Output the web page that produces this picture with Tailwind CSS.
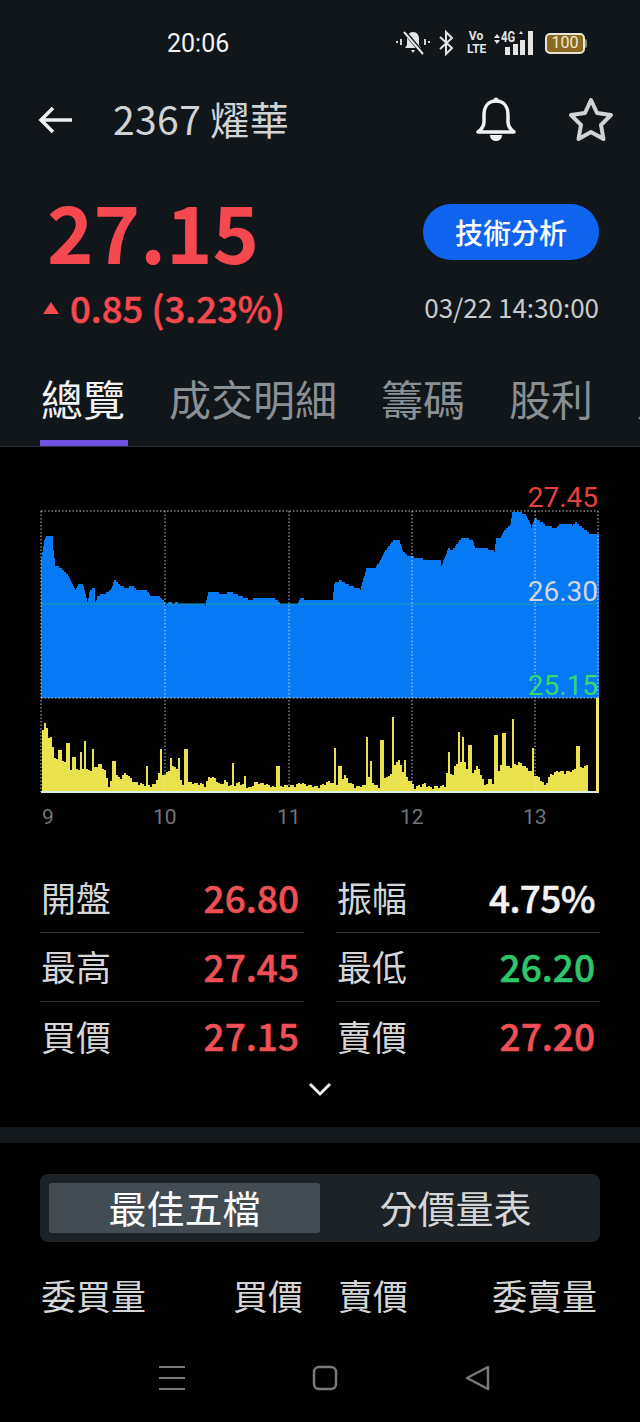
<!DOCTYPE html>
<html lang="en">
<head>
    <meta charset="UTF-8">
    <title>2367 燿華</title>
    <script src="https://cdn.jsdelivr.net/npm/@tailwindcss/browser@4"></script>
</head>
<body class="bg-black text-white w-[640px] h-[1422px] overflow-hidden font-['Noto_Sans_CJK_TC','Noto_Sans',sans-serif]">
    <!-- Top header -->
    <header class="bg-[#11161a] h-[447px] border-b border-[#2a2e32] flex flex-col">
        <!-- Status bar -->
        <div class="h-[86px] flex items-center pl-[167px] pr-[50px] shrink-0 font-['Roboto',sans-serif]">
            <span class="text-[25px] leading-none text-[#f2f2f2] w-[229px]">20:06</span>
            <svg width="34" height="26" viewBox="0 0 34 26" class="shrink-0">
                <path d="M17 2c-4 0-6 3-6 7v6l-2 3h16l-2-3V9c0-4-2-7-6-7z" fill="#e4e4e4"/>
                <path d="M15 20h4l-2 3z" fill="#e4e4e4"/>
                <path d="M8 1l20 24" stroke="#11161a" stroke-width="4"/>
                <path d="M8 2l19 22" stroke="#e4e4e4" stroke-width="2"/>
                <path d="M5 9v6M1 11v2M29 9v6M33 11v2" stroke="#d0d0d0" stroke-width="2"/>
            </svg>
            <svg width="16" height="26" viewBox="0 0 16 26" class="ml-[8px] shrink-0" fill="none" stroke="#e4e4e4" stroke-width="2">
                <path d="M2 7l12 11-6 6V2l6 6L2 19"/>
            </svg>
            <div class="ml-[13px] w-[18px] text-[12px] leading-[13px] font-bold text-[#e4e4e4] text-center font-['Liberation_Sans_Narrow','Roboto',sans-serif] shrink-0">Vo<br>LTE</div>
            <div class="ml-[9px] relative w-[40px] h-[26px] shrink-0">
                <span class="absolute left-[7px] top-[-3px] text-[15px] leading-[20px] font-bold text-[#e4e4e4] scale-x-75 origin-left">4G</span>
                <svg width="40" height="26" viewBox="0 0 40 26" class="absolute inset-0">
                    <path d="M0 8l3-4 3 4zM0 10l3 4 3-4z" fill="#e4e4e4"/>
                    <path d="M25 4l2-3 2 3z" fill="#e4e4e4"/>
                    <rect x="11" y="17" width="5" height="8" fill="#e4e4e4"/>
                    <rect x="19" y="14" width="5" height="11" fill="#e4e4e4"/>
                    <rect x="26" y="10" width="5" height="15" fill="#e4e4e4"/>
                    <rect x="34" y="1" width="5" height="24" fill="#e4e4e4"/>
                </svg>
            </div>
            <div class="ml-[11px] w-[40px] h-[21px] border-2 border-[#e8e4d8] rounded-[5px] bg-[#8a6a1e] flex items-center justify-center text-[16px] leading-none text-[#f2ecd8] shrink-0">100</div>
            <div class="w-[2px] h-[9px] bg-[#888] rounded-r-sm shrink-0"></div>
        </div>

        <!-- Title row -->
        <div class="h-[68px] flex items-center pl-[38px] pr-[26px] shrink-0">
            <svg width="35" height="28" viewBox="0 0 35 28" fill="none" stroke="#f0f0f0" stroke-width="3.500" class="shrink-0">
                <path d="M34 14H4M15 2L3 14l12 12"/>
            </svg>
            <h1 class="ml-[40px] mb-[4px] text-[39px] leading-none tracking-[0.4px] text-[#d0d3d6]">2367 燿華</h1>
            <svg width="40" height="46" viewBox="0 0 40 46" fill="none" class="ml-auto shrink-0">
                <circle cx="20" cy="3" r="2.500" fill="#f2f2f2"/>
                <path d="M20 4c-8 0-12 6-12 14v7c0 4-2 7-6 10h36c-4-3-6-6-6-10v-7c0-8-4-14-12-14z" stroke="#f2f2f2" stroke-width="3.500" stroke-linejoin="round"/>
                <path d="M14 38h12c0 4-3 6-6 6s-6-2-6-6z" fill="#f2f2f2"/>
            </svg>
            <svg width="46" height="46" viewBox="0 0 46 46" fill="none" class="ml-[52px] mt-[-2px] shrink-0">
                <path d="M23 4l6 13 14 2-10 10 2.500 14L23 36l-12.500 7L13 29 3 19l14-2z" stroke="#d0d3d6" stroke-width="4" stroke-linejoin="round"/>
            </svg>
        </div>

        <!-- Price row -->
        <div class="flex justify-between pl-[47px] pr-[41px] mt-[36px] shrink-0">
            <div>
                <div class="text-[79px] leading-[80px] font-bold text-[#f6484f]">27.15</div>
                <div class="flex items-center mt-[18px] ml-[-4px] text-[36.500px] leading-[40px] font-medium text-[#f6484f] whitespace-nowrap [-webkit-text-stroke:0.5px_#f6484f]">
                    <span class="w-0 h-0 border-x-[8px] border-x-transparent border-b-[12px] border-b-[#f6484f] mr-[11px]"></span>
                    0.85 (3.23%)
                </div>
            </div>
            <div class="flex flex-col items-end">
                <button class="w-[176px] h-[56px] rounded-full bg-[#0e64ee] text-[28px] font-medium text-white mt-[14px]">技術分析</button>
                <div class="mt-[33px] text-[26px] leading-[28px] text-[#c8cbce] whitespace-nowrap">03/22 14:30:00</div>
            </div>
        </div>

        <!-- Tabs -->
        <nav class="relative flex mt-auto h-[82px] pt-[2px] pl-[41px] gap-[44px] text-[42px] leading-[64px] text-[#8a8f93] whitespace-nowrap overflow-hidden">
            <span class="text-[#f2f2f2]">總覽</span>
            <span>成交明細</span>
            <span>籌碼</span>
            <span>股利</span>
            <span>財務</span>
            <span class="absolute left-[40px] bottom-0 w-[88px] h-[6px] bg-[#7152e0]"></span>
        </nav>
    </header>

    <!-- Chart -->
    <section class="relative h-[400px] font-['Roboto',sans-serif]">
        <svg id="chart" width="640" height="400" viewBox="0 447 640 400" class="absolute inset-0">
            <path id="area" fill="#0679f5"/>
            <path id="vol" fill="none" stroke="#e9e24d" stroke-width="2"/>
            <path d="M41 604H598" stroke="#1e9fb0" stroke-width="1"/>
            <path d="M41 511H598M41 698H598M41 511V792M165 511V792M289 511V792M412 511V792M535 511V792M598 511V792" stroke="#e8e8e8" stroke-width="1" stroke-dasharray="1.500 2" fill="none" opacity="0.85"/>
            <path d="M41 792H599" stroke="#d8efe4" stroke-width="2"/>
            <rect x="596" y="698" width="3" height="94" fill="#efe86a"/>
        </svg>
        <span class="absolute right-[42px] top-[36px] text-[28px] leading-[30px] text-[#e8413f]">27.45</span>
        <span class="absolute right-[42px] top-[130px] text-[28px] leading-[30px] text-[#d2d6da]">26.30</span>
        <span class="absolute right-[42px] top-[224px] text-[28px] leading-[30px] text-[#35d96b]">25.15</span>
        <span class="absolute left-[42px] top-[358px] text-[21px] leading-[24px] text-[#6f7478]">9</span>
        <span class="absolute left-[153px] top-[358px] text-[21px] leading-[24px] text-[#6f7478]">10</span>
        <span class="absolute left-[277px] top-[358px] text-[21px] leading-[24px] text-[#6f7478]">11</span>
        <span class="absolute left-[400px] top-[358px] text-[21px] leading-[24px] text-[#6f7478]">12</span>
        <span class="absolute left-[523px] top-[358px] text-[21px] leading-[24px] text-[#6f7478]">13</span>
    </section>

    <!-- Quote table -->
    <section class="grid grid-cols-[264px_264px] gap-x-[32px] pl-[40px] mt-[17px] text-[37px] leading-[46px]">
        <div class="flex justify-between items-center h-[69px] border-b border-[#33373a] pl-[1px] pr-[5px]"><span class="text-[#d4d6d8] text-[35px] mt-[-2px]">開盤</span><span class="font-medium text-[#ee5055] mt-[-3px] [-webkit-text-stroke:0.5px_#ee5055]">26.80</span></div>
        <div class="flex justify-between items-center h-[69px] border-b border-[#33373a] pl-[1px] pr-[5px]"><span class="text-[#d4d6d8] text-[35px] mt-[-2px]">振幅</span><span class="font-medium text-[#f2f2f2] mt-[-3px] tracking-[-0.6px] [-webkit-text-stroke:0.5px_#f2f2f2]">4.75%</span></div>
        <div class="flex justify-between items-center h-[69px] border-b border-[#33373a] pl-[1px] pr-[5px]"><span class="text-[#d4d6d8] text-[35px] mt-[-2px]">最高</span><span class="font-medium text-[#ee5055] mt-[-3px] [-webkit-text-stroke:0.5px_#ee5055]">27.45</span></div>
        <div class="flex justify-between items-center h-[69px] border-b border-[#33373a] pl-[1px] pr-[5px]"><span class="text-[#d4d6d8] text-[35px] mt-[-2px]">最低</span><span class="font-medium text-[#2fc56a] mt-[-3px] [-webkit-text-stroke:0.5px_#2fc56a]">26.20</span></div>
        <div class="flex justify-between items-center h-[69px] pl-[1px] pr-[5px]"><span class="text-[#d4d6d8] text-[35px] mt-[-2px]">買價</span><span class="font-medium text-[#ee5055] mt-[-3px] [-webkit-text-stroke:0.5px_#ee5055]">27.15</span></div>
        <div class="flex justify-between items-center h-[69px] pl-[1px] pr-[5px]"><span class="text-[#d4d6d8] text-[35px] mt-[-2px]">賣價</span><span class="font-medium text-[#ee5055] mt-[-3px] [-webkit-text-stroke:0.5px_#ee5055]">27.20</span></div>
    </section>
    <div class="flex justify-center mt-[10px]">
        <svg width="24" height="16" viewBox="0 0 24 16" fill="none" stroke="#e8e8e8" stroke-width="3"><path d="M2 3l10 10L22 3"/></svg>
    </div>

    <!-- Divider band -->
    <div class="h-[16px] bg-[#14191d] mt-[30px]"></div>

    <!-- Segmented control -->
    <div class="mx-[40px] mt-[31px] h-[68px] rounded-lg bg-[#1d2227] p-[9px] flex text-[38px] text-[#d4d6d8]">
        <div class="w-[271px] rounded-[3px] bg-[#434c53] text-white flex items-center justify-center pb-[3px]">最佳五檔</div>
        <div class="flex-1 flex items-center justify-center pb-[3px]">分價量表</div>
    </div>

    <!-- Order book header -->
    <div class="ml-[41px] mt-[29px] flex text-[35px] leading-[48px] text-[#d4d6d8] whitespace-nowrap">
        <span class="w-[192px]">委買量</span>
        <span class="w-[105px]">買價</span>
        <span class="w-[154px]">賣價</span>
        <span>委賣量</span>
    </div>

    <!-- Android nav bar -->
    <div class="flex items-start mt-[46px] pl-[159px]">
        <svg width="26" height="26" viewBox="0 0 26 26" stroke="#77797b" stroke-width="2"><path d="M0 2H26M0 13H26M0 24H26"/></svg>
        <svg width="26" height="26" viewBox="0 0 26 26" fill="none" stroke="#77797b" stroke-width="2.500" class="ml-[127px]"><rect x="2" y="2" width="22" height="22" rx="5"/></svg>
        <svg width="26" height="26" viewBox="0 0 26 26" fill="none" stroke="#77797b" stroke-width="2.500" stroke-linejoin="round" class="ml-[127px]"><path d="M23 2v22L2 13z"/></svg>
    </div>

    <script>
        const priceKeys = [[41,557],[44,540],[47,535],[52,535],[53,550],[55,565],[60,568],[68,575],[73,585],[75,590],[78,583],[82,583],[84,590],[87,602],[89,592],[92,588],[94,588],[95,602],[97,596],[105,593],[110,590],[114,580],[120,585],[126,588],[132,585],[137,590],[147,591],[150,596],[158,595],[163,600],[165,605],[170,601],[173,604],[176,601],[178,604],[205,605],[208,592],[215,592],[222,594],[230,592],[240,596],[250,600],[258,597],[275,599],[280,603],[297,603],[300,597],[305,600],[332,599],[334,583],[340,580],[350,586],[360,589],[366,568],[375,568],[380,560],[383,553],[393,540],[399,540],[402,550],[408,556],[420,558],[426,560],[440,560],[441,566],[448,548],[452,550],[462,537],[472,540],[475,548],[485,548],[494,551],[496,538],[500,538],[504,530],[510,524],[512,511],[516,511],[525,514],[530,524],[531,527],[535,518],[545,525],[555,528],[560,524],[572,525],[575,522],[585,530],[590,534],[598,534]];
        const volBody = [[42,730],[46,720],[48,735],[52,738],[54,755],[58,760],[62,760],[66,762],[68,770],[80,768],[90,770],[100,763],[105,770],[109,785],[115,773],[120,778],[126,772],[130,777],[135,782],[140,783],[150,785],[155,784],[160,770],[165,775],[170,768],[175,765],[180,775],[183,785],[190,782],[200,783],[205,785],[210,775],[216,778],[220,785],[225,780],[230,785],[240,782],[250,788],[255,782],[265,783],[275,787],[285,785],[295,785],[300,782],[310,785],[320,786],[330,780],[335,785],[345,775],[350,782],[355,786],[365,785],[370,775],[375,785],[380,786],[383,775],[388,778],[395,765],[398,758],[405,775],[410,780],[415,787],[425,783],[430,787],[445,785],[448,767],[453,775],[456,762],[465,762],[470,780],[476,765],[480,770],[485,785],[490,778],[495,785],[500,765],[510,766],[520,762],[530,770],[540,778],[545,785],[550,775],[558,770],[565,772],[572,770],[578,768],[587,765]];
        const volSpikes = [[60,750],[68,743],[74,757],[81,752],[85,741],[93,749],[114,761],[147,766],[161,749],[171,758],[179,758],[186,749],[233,763],[245,776],[278,766],[335,748],[340,766],[367,737],[371,761],[382,740],[393,717],[405,760],[449,752],[459,732],[463,737],[470,745],[496,735],[504,733],[513,719],[533,748],[578,746]];
        const lerp = (keys, x) => {
            let i = 0;
            while (i < keys.length - 2 && keys[i + 1][0] <= x) i++;
            const [x0, y0] = keys[i], [x1, y1] = keys[i + 1];
            return y0 + (y1 - y0) * Math.min(1, (x - x0) / (x1 - x0));
        };
        // one tick is 4px on this axis, so the outline moves in steps
        let area = 'M41 698V557';
        for (let x = 41; x <= 598; x++) {
            const y = Math.round(lerp(priceKeys, x) / 2) * 2;
            area += `V${y}H${x + 1}`;
        }
        document.getElementById('area').setAttribute('d', area + 'V698Z');

        let vol = '';
        for (let x = 43; x <= 587; x += 2) {
            let y = Math.round(lerp(volBody, x));
            const spike = volSpikes.find(s => Math.abs(s[0] - x) <= 1);
            if (spike) y = spike[1];
            else if (x % 6 === 1) y = Math.min(791, y + 2);
            vol += `M${x} 792V${y}`;
        }
        document.getElementById('vol').setAttribute('d', vol);
    </script>
</body>
</html>
